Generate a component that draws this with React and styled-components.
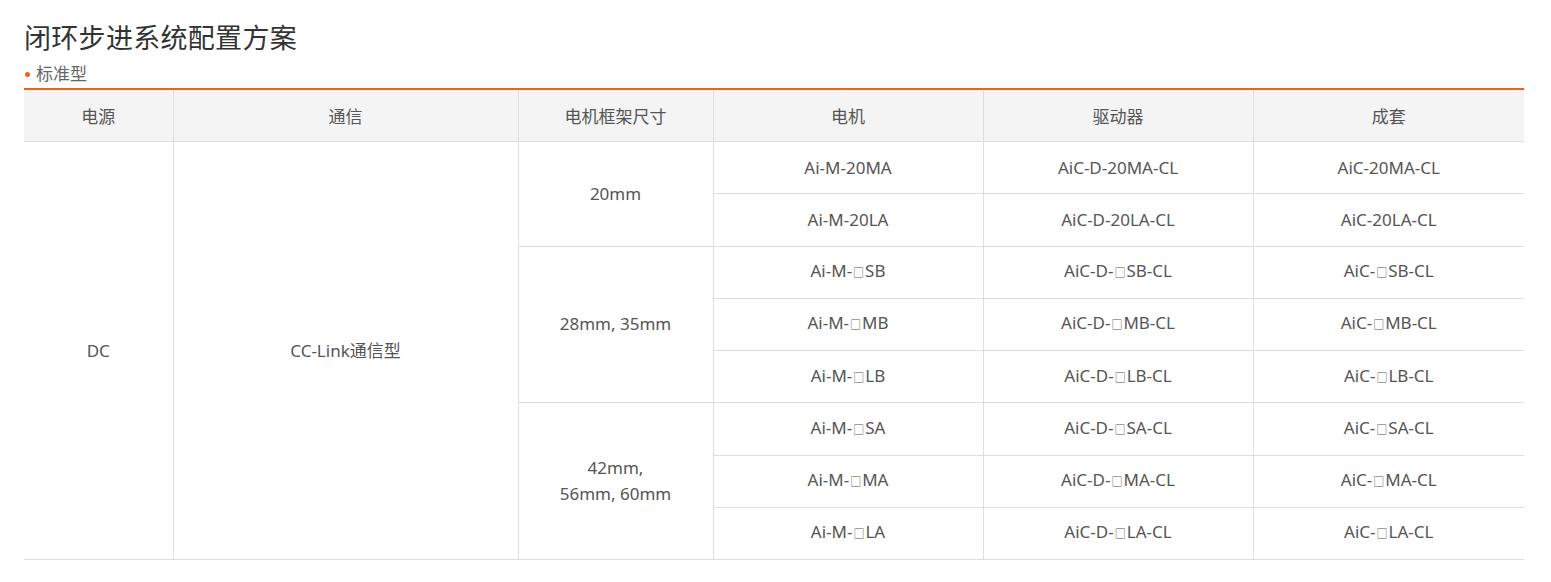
import React from 'react';
import styled, { createGlobalStyle } from "styled-components";

const GlobalStyle = createGlobalStyle`
    body {
        margin: 0;
        background: #fff;
        font-family: "Noto Sans", "Noto Sans CJK SC", sans-serif;
        color: #555;
    }
`

const Page = styled.div`
    padding: 20px 27px 0 24px;
`

const Title = styled.h2`
    margin: 0;
    font-size: 27px;
    font-weight: 400;
    line-height: 36px;
    color: #333;
    letter-spacing: 0.3px;
`

const SubTitle = styled.div`
    display: flex;
    align-items: center;
    gap: 6px;
    margin-top: 7px;
    font-size: 17px;
    line-height: 22px;
    color: #666;
    padding-bottom: 3px;
    border-bottom: 2px solid #e8641e;
    &::before {
        content: "";
        width: 5px;
        height: 5px;
        border-radius: 50%;
        background: #e8641e;
        margin-left: 1px;
    }
`

const Table = styled.table`
    width: 100%;
    border-collapse: collapse;
    table-layout: fixed;
    font-size: 17px;
    color: #555;
`

const Th = styled.th`
    background: #f4f4f4;
    font-weight: 400;
    height: 51px;
    padding: 0;
    border: 1px solid #dedede;
    border-top: none;
    &:first-child { border-left: none; }
    &:last-child { border-right: none; }
`

const Td = styled.td`
    text-align: center;
    height: 51.25px;
    padding: 0;
    line-height: 26px;
    border: 1px solid #dedede;
    &:first-child { border-left: none; }
    &:last-child { border-right: none; }
`

const Box = styled.span`
    font-size: 11px;
    margin: 0 1px;
`

const cols = [149, 345, 195, 270, 270, 271];
const heads = ["电源", "通信", "电机框架尺寸", "电机", "驱动器", "成套"];

const groups = [
    { size: "20mm", rows: [["", "20MA"], ["", "20LA"]] },
    { size: "28mm, 35mm", rows: [["□", "SB"], ["□", "MB"], ["□", "LB"]] },
    { size: <>42mm,<br />56mm, 60mm</>, rows: [["□", "SA"], ["□", "MA"], ["□", "LA"]] },
];

const Code = ({ pre, box, tail }) => (
    <>{pre}{box && <Box>{box}</Box>}{tail}</>
);

const App = () => {
    return (
        <>
        <GlobalStyle />
        <Page>
            <Title>闭环步进系统配置方案</Title>
            <SubTitle>标准型</SubTitle>
            <Table>
                <colgroup>
                    {cols.map((w, i) => <col key={i} style={{ width: w }} />)}
                </colgroup>
                <thead>
                    <tr>
                        {heads.map(h => <Th key={h}>{h}</Th>)}
                    </tr>
                </thead>
                <tbody>
                    {groups.map((g, gi) =>
                        g.rows.map(([box, r], ri) => (
                            <tr key={gi + "-" + ri}>
                                {gi === 0 && ri === 0 && (
                                    <>
                                        <Td rowSpan={8}>DC</Td>
                                        <Td rowSpan={8}>CC-Link通信型</Td>
                                    </>
                                )}
                                {ri === 0 && <Td rowSpan={g.rows.length}>{g.size}</Td>}
                                <Td><Code pre="Ai-M-" box={box} tail={r} /></Td>
                                <Td><Code pre="AiC-D-" box={box} tail={r + "-CL"} /></Td>
                                <Td><Code pre="AiC-" box={box} tail={r + "-CL"} /></Td>
                            </tr>
                        ))
                    )}
                </tbody>
            </Table>
        </Page>
        </>
    )
}

export default App
